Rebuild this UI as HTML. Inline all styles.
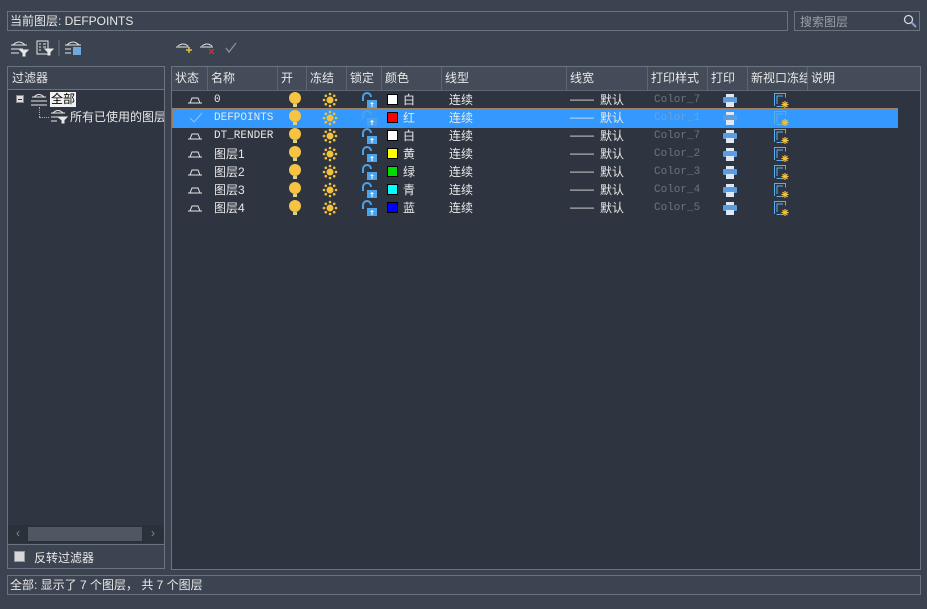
<!DOCTYPE html>
<html><head><meta charset="utf-8"><style>
*{margin:0;padding:0;box-sizing:border-box}
body{width:927px;height:609px;background:#3b4350;font-family:"Liberation Sans","Noto Sans CJK SC",sans-serif;font-size:12px;color:#e8e8e8;position:relative;overflow:hidden}
.a{position:absolute}
.box{position:absolute;border:1px solid #6b7380}
.hd{position:absolute;top:0;height:23px;line-height:23px;padding-left:3px;border-right:1px solid #5d6572;white-space:nowrap;overflow:hidden}
.row{position:absolute;left:1px;width:747px;height:18px;line-height:18px}
.row span{position:absolute;white-space:nowrap}
.mono{font-family:"Liberation Mono","Noto Sans CJK SC",monospace;font-size:11px}
.sw{position:absolute;width:11px;height:11px;border:1px solid #000;top:3px}
.bulb{position:absolute;width:12px;height:12px;border-radius:50%;background:#f6c343;top:1px}
.bulb:after{content:"";position:absolute;left:4px;top:12px;width:4px;height:3px;background:#d9d28a}
</style></head><body>
<div class="box" style="left:7px;top:11px;width:781px;height:20px;line-height:18px;padding-left:2px;font-size:12px">当前图层: DEFPOINTS</div>
<div class="box" style="left:794px;top:11px;width:126px;height:20px;line-height:20px;padding-left:5px;color:#9aa0a8">搜索图层
<svg class="a" style="left:108px;top:2px" width="14" height="14"><circle cx="5.5" cy="5.5" r="4" fill="none" stroke="#cfd6e0" stroke-width="1.3"/><line x1="8.5" y1="8.5" x2="13" y2="13" stroke="#8fa0c0" stroke-width="2"/></svg></div>

<!-- toolbar -->
<svg class="a" style="left:9px;top:39px" width="80" height="18" fill="none" stroke="#e6e6e6" stroke-width="1">
<path d="M4 6 Q10 0 16 6 M2 6h16 M2 10h12 M2 14h8"/><path d="M11 11h8l-3 3v3h-2v-3z" fill="#e6e6e6"/>
<rect x="28" y="2" width="11" height="13"/><path d="M30 5h2 M34 5h3 M30 8h2 M34 8h3 M30 11h2"/><path d="M36 10h8l-3 3v3h-2v-3z" fill="#e6e6e6"/>
<line x1="50" y1="1" x2="50" y2="17" stroke="#6b7380"/>
<path d="M58 6 Q64 0 70 6 M56 6h16 M56 10h6 M56 14h6"/><rect x="64" y="8" width="8" height="8" fill="#6fa8dc" stroke="none"/>
</svg>
<svg class="a" style="left:175px;top:40px" width="70" height="16" fill="none" stroke="#e6e6e6">
<path d="M3 6 Q8 2 13 6 M1 7h13"/><path d="M11 10h6 M14 7v6" stroke="#e3c040" stroke-width="1.5"/>
<path d="M27 6 Q32 2 37 6 M25 7h13"/><path d="M34 9l5 5 M39 9l-5 5" stroke="#c04040"/>
<path d="M51 8l3 4 7-9" stroke="#8a9099" stroke-width="1.3"/>
</svg>

<!-- left panel -->
<div class="box" style="left:7px;top:66px;width:158px;height:503px;background:#303641">
 <div class="a" style="left:0;top:0;width:156px;height:23px;line-height:22px;padding-left:4px;background:#3d4451;border-bottom:1px solid #6b7380">过滤器</div>
 <div class="a" style="left:8px;top:28px;width:8px;height:8px;background:#ddd;border:1px solid #888"><div style="position:absolute;left:1px;top:3px;width:4px;height:1px;background:#333"></div></div>
 <svg class="a" style="left:20px;top:25px" width="24" height="16" fill="none" stroke="#e6e6e6"><path d="M6 5 Q11 0 16 5 M4 5h14 M3 9h16 M3 13h16"/></svg>
 <div class="a" style="left:42px;top:25px;background:#f2f2f2;color:#000;padding:0 1px;line-height:15px">全部</div>
 <div class="a" style="left:31px;top:40px;width:1px;height:10px;border-left:1px dotted #aaa"></div>
 <div class="a" style="left:31px;top:50px;width:10px;border-top:1px dotted #aaa"></div>
 <svg class="a" style="left:41px;top:41px" width="20" height="16" fill="none" stroke="#e6e6e6"><path d="M4 5 Q9 0 14 5 M2 5h14 M2 9h8 M2 13h6"/><path d="M9 9h9l-3 3v3h-2v-3z" fill="#e6e6e6"/></svg>
 <div class="a" style="left:62px;top:41px;white-space:nowrap;width:94px;overflow:hidden">所有已使用的图层</div>
 <div class="a" style="left:0;top:458px;width:156px;height:18px;background:#2b313b"><span class="a" style="left:8px;top:1px;color:#888">‹</span><div class="a" style="left:20px;top:2px;width:114px;height:14px;background:#4f5763"></div><span class="a" style="left:143px;top:1px;color:#888">›</span></div>
 <div class="a" style="left:0;top:477px;width:156px;height:24px;background:#3d4451;border-top:1px solid #6b7380">
  <div class="a" style="left:6px;top:6px;width:11px;height:11px;background:#d8d8d8;border:1px solid #999"></div>
  <span class="a" style="left:26px;top:4px">反转过滤器</span></div>
</div>

<!-- right panel -->
<div class="box" style="left:171px;top:66px;width:750px;height:504px;background:#2f3540">
 <div class="a" style="left:0;top:0;width:748px;height:24px;background:#444c59;border-bottom:1px solid #5d6572">
  <div class="hd" style="left:0;width:36px">状态</div>
  <div class="hd" style="left:36px;width:70px">名称</div>
  <div class="hd" style="left:106px;width:29px">开</div>
  <div class="hd" style="left:135px;width:40px">冻结</div>
  <div class="hd" style="left:175px;width:35px">锁定</div>
  <div class="hd" style="left:210px;width:60px">颜色</div>
  <div class="hd" style="left:270px;width:125px">线型</div>
  <div class="hd" style="left:395px;width:81px">线宽</div>
  <div class="hd" style="left:476px;width:60px">打印样式</div>
  <div class="hd" style="left:536px;width:40px">打印</div>
  <div class="hd" style="left:576px;width:60px">新视口冻结</div>
  <div class="hd" style="left:636px;width:112px;border:0">说明</div>
 </div>
 <div id="rows"></div>
</div>

<div class="box" style="left:7px;top:575px;width:914px;height:20px;line-height:18px;padding-left:2px;background:#3d4451">全部: 显示了 7 个图层， 共 7 个图层</div>

<script>
var d=[["0","白","#fff","7"],["DEFPOINTS","红","#f00","1"],["DT_RENDER","白","#fff","7"],["图层1","黄","#ff0","2"],["图层2","绿","#0d0","3"],["图层3","青","#0ff","4"],["图层4","蓝","#00f","5"]];
var h="";
d.forEach(function(r,i){
 var sel=i==1, t=24+i*18;
 var st=sel?'<svg class="a" style="left:15px;top:3px" width="16" height="12"><path d="M2 6l4 4 8-9" fill="none" stroke="#8cc4ff" stroke-width="1"/></svg>':'<svg class="a" style="left:14px;top:4px" width="18" height="10"><path d="M1 8h14 M3 8L5 3h6l2 5" fill="none" stroke="#e6e6e6"/></svg>';
 var nm=(r[0].charCodeAt(0)<128)?'<span class="mono" style="left:41px">'+r[0]+'</span>':'<span style="left:41px">'+r[0]+'</span>';
 h+='<div class="row" style="top:'+t+'px;'+(sel?'background:#3399ff;outline:1px solid #a08060;width:724px':'')+'">'+st+nm+
 '<div class="bulb" style="left:116px"></div>'+
 '<svg class="a" style="left:149px;top:1px" width="16" height="16"><g fill="#f3c23b"><circle cx="8" cy="8" r="3.5"/><circle cx="8" cy="2" r="1.3"/><circle cx="8" cy="14" r="1.3"/><circle cx="2" cy="8" r="1.3"/><circle cx="14" cy="8" r="1.3"/><circle cx="3.8" cy="3.8" r="1.3"/><circle cx="12.2" cy="3.8" r="1.3"/><circle cx="3.8" cy="12.2" r="1.3"/><circle cx="12.2" cy="12.2" r="1.3"/></g></svg>'+
 '<svg class="a" style="left:187px;top:1px" width="18" height="17"><path d="M3 9V5a4 4 0 0 1 8 0" fill="none" stroke="#4da3e8" stroke-width="2"/><rect x="7" y="8" width="10" height="8" fill="#4da3e8"/><path d="M12 10l-2 2h4z M11.5 12h1v3h-1z" fill="#fff"/></svg>'+
 '<div class="sw" style="left:214px;background:'+r[2]+'"></div><span style="left:230px">'+r[1]+'</span>'+
 '<span style="left:276px">连续</span>'+
 '<span style="left:397px;top:-1px">——</span><span style="left:427px">默认</span>'+
 '<span class="mono" style="left:481px;color:'+(sel?'#6fa0d8':'#6c737e')+'">Color_'+r[3]+'</span>'+
 '<svg class="a" style="left:550px;top:3px" width="14" height="13"><rect x="3" y="0" width="8" height="3" fill="#dfe8f5"/><rect x="0" y="3" width="14" height="6" rx="1" fill="#5a9de0"/><rect x="3" y="8" width="8" height="5" fill="#dfe8f5"/></svg>'+
 '<svg class="a" style="left:600px;top:1px" width="16" height="17"><path d="M1.5 14V1.5h11v4 M4 12V4h6" fill="none" stroke="#5aaef0"/><path d="M3.5 14.5h6" stroke="#5aaef0"/><g stroke="#f3c23b" stroke-width="1.2"><path d="M12 9v7 M8.5 12.5h7 M9.5 10l5 5 M14.5 10l-5 5"/></g></svg>'+
 '</div>';
});
document.getElementById("rows").innerHTML=h;
</script>
</body></html>
